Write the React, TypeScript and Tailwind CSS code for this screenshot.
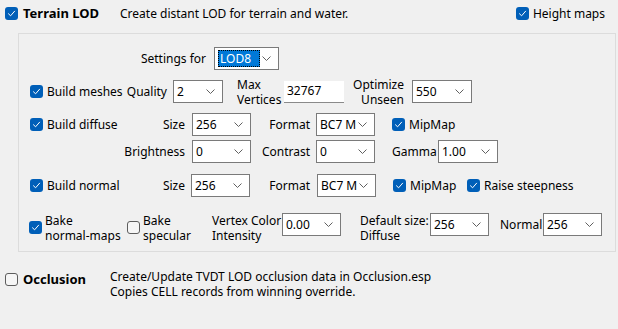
import { ReactNode } from 'react';

function Box({ on }: { on: boolean }) {
  return on ? (
    <span className="flex h-[13px] w-[13px] shrink-0 items-center justify-center rounded-[3px] bg-[#005fb8]">
      <svg width="9" height="9" viewBox="0 0 9 9" fill="none">
        <path d="M1.5 4.8 L3.6 6.8 L7.6 2.2" stroke="white" strokeWidth="1" strokeLinecap="round" strokeLinejoin="round" />
      </svg>
    </span>
  ) : (
    <span className="block h-[13px] w-[13px] shrink-0 rounded-[3px] border border-[#5d5d5d] bg-[#f6f6f6]" />
  );
}

function Check({ on = true, label, className = '', bold = false }: { on?: boolean; label: ReactNode; className?: string; bold?: boolean }) {
  return (
    <div className={`flex shrink-0 items-center gap-[4px] whitespace-nowrap ${className}`}>
      <Box on={on} />
      <span className={bold ? 'font-bold text-[13px]' : ''}>{label}</span>
    </div>
  );
}

function Combo({ value, className = '', selected = false }: { value: string; className?: string; selected?: boolean }) {
  return (
    <div className={`flex h-[23px] shrink-0 items-center border border-[#7a7a7a] bg-white pl-[3px] ${className}`}>
      {selected ? (
        <span className="flex h-[17px] w-[42px] items-center border border-dotted border-black bg-[#0078d7] pl-[1px] text-white">{value}</span>
      ) : (
        <span className="flex-1 whitespace-nowrap">{value}</span>
      )}
      <svg className="ml-auto mr-[7px] shrink-0" width="9" height="5" viewBox="0 0 9 5" fill="none">
        <path d="M0.5 0.5 L4.5 4.5 L8.5 0.5" stroke="#606060" strokeWidth="1" />
      </svg>
    </div>
  );
}

function Lbl({ children, className = '' }: { children: ReactNode; className?: string }) {
  return <div className={`shrink-0 whitespace-nowrap leading-[15px] ${className}`}>{children}</div>;
}

export default function App() {
  return (
    <div className="h-[329px] w-[618px] overflow-hidden bg-[#f0f0f0] text-[12px] text-black" style={{ fontFamily: '"Noto Sans", "Open Sans", sans-serif' }}>
      {/* header */}
      <div className="flex h-[33px] items-center pb-[6px] pl-[5px]">
        <Check label="Terrain LOD" bold className="w-[115px] gap-[5px]" />
        <span>Create distant LOD for terrain and water.</span>
        <Check label="Height maps" className="ml-auto mr-[13px]" />
      </div>

      <div className="ml-[18px] h-[219px] w-[598px] border border-[#dcdcdc]">
        {/* settings for */}
        <div className="mt-[13px] flex h-[23px] items-center">
          <Lbl className="ml-[111px] w-[76px] text-right">Settings for</Lbl>
          <Combo value="LOD8" selected className="ml-[8px] w-[65px]" />
        </div>

        {/* build meshes */}
        <div className="mt-[10px] flex h-[23px] items-center">
          <Check label="Build meshes" className="ml-[11px] w-[90px]" />
          <Lbl className="w-[47px] text-right">Quality</Lbl>
          <Combo value="2" className="ml-[6px] w-[50px]" />
          <Lbl className="ml-[14px] w-[42px]">Max<br />Vertices</Lbl>
          <div className="ml-[5px] flex h-[22px] w-[60px] shrink-0 items-center border-b border-[#8a8a8a] bg-white pl-[3px]">32767</div>
          <Lbl className="w-[60px] text-right">Optimize<br />Unseen</Lbl>
          <Combo value="550" className="ml-[8px] w-[60px]" />
        </div>

        {/* build diffuse */}
        <div className="mt-[10px] flex h-[23px] items-center">
          <Check label="Build diffuse" className="ml-[11px] w-[100px]" />
          <Lbl className="w-[55px] text-right">Size</Lbl>
          <Combo value="256" className="ml-[7px] w-[59px]" />
          <Lbl className="w-[59px] text-right">Format</Lbl>
          <Combo value="BC7 M" className="ml-[6px] w-[59px]" />
          <Check label="MipMap" className="ml-[17px]" />
        </div>

        <div className="mt-[4px] flex h-[23px] items-center">
          <Lbl className="w-[166px] text-right">Brightness</Lbl>
          <Combo value="0" className="ml-[7px] w-[59px]" />
          <Lbl className="w-[59px] text-right">Contrast</Lbl>
          <Combo value="0" className="ml-[6px] w-[59px]" />
          <Lbl className="ml-[17px] w-[42px]">Gamma</Lbl>
          <Combo value="1.00" className="ml-[4px] w-[60px]" />
        </div>

        {/* build normal */}
        <div className="mt-[11px] flex h-[23px] items-center">
          <Check label="Build normal" className="ml-[11px] w-[100px]" />
          <Lbl className="w-[55px] text-right">Size</Lbl>
          <Combo value="256" className="ml-[6px] w-[59px]" />
          <Lbl className="w-[60px] text-right">Format</Lbl>
          <Combo value="BC7 M" className="ml-[7px] w-[59px]" />
          <Check label="MipMap" className="ml-[17px] w-[74px]" />
          <Check label="Raise steepness" />
        </div>

        {/* bake */}
        <div className="mt-[16px] flex h-[31px] items-start">
          <div className="ml-[10px] flex w-[98px] shrink-0 items-start gap-[3px]">
            <span className="mt-[8px]"><Box on /></span>
            <Lbl>Bake<br />normal-maps</Lbl>
          </div>
          <div className="flex w-[85px] shrink-0 items-start gap-[3px]">
            <span className="mt-[8px]"><Box on={false} /></span>
            <Lbl>Bake<br />specular</Lbl>
          </div>
          <Lbl className="w-[70px]">Vertex Color<br />Intensity</Lbl>
          <Combo value="0.00" className="w-[59px]" />
          <Lbl className="ml-[19px] w-[70px]">Default size:<br />Diffuse</Lbl>
          <Combo value="256" className="w-[59px]" />
          <Lbl className="ml-[11px] mt-[4px] w-[43px]">Normal</Lbl>
          <Combo value="256" className="w-[59px]" />
        </div>
      </div>

      {/* occlusion */}
      <div className="mt-[17px] flex items-start pl-[5px]">
        <div className="mt-[1px] w-[105px] shrink-0">
          <Check on={false} label="Occlusion" bold className="gap-[5px]" />
        </div>
        <Lbl>
          Create/Update TVDT LOD occlusion data in Occlusion.esp<br />
          Copies CELL records from winning override.
        </Lbl>
      </div>
    </div>
  );
}
